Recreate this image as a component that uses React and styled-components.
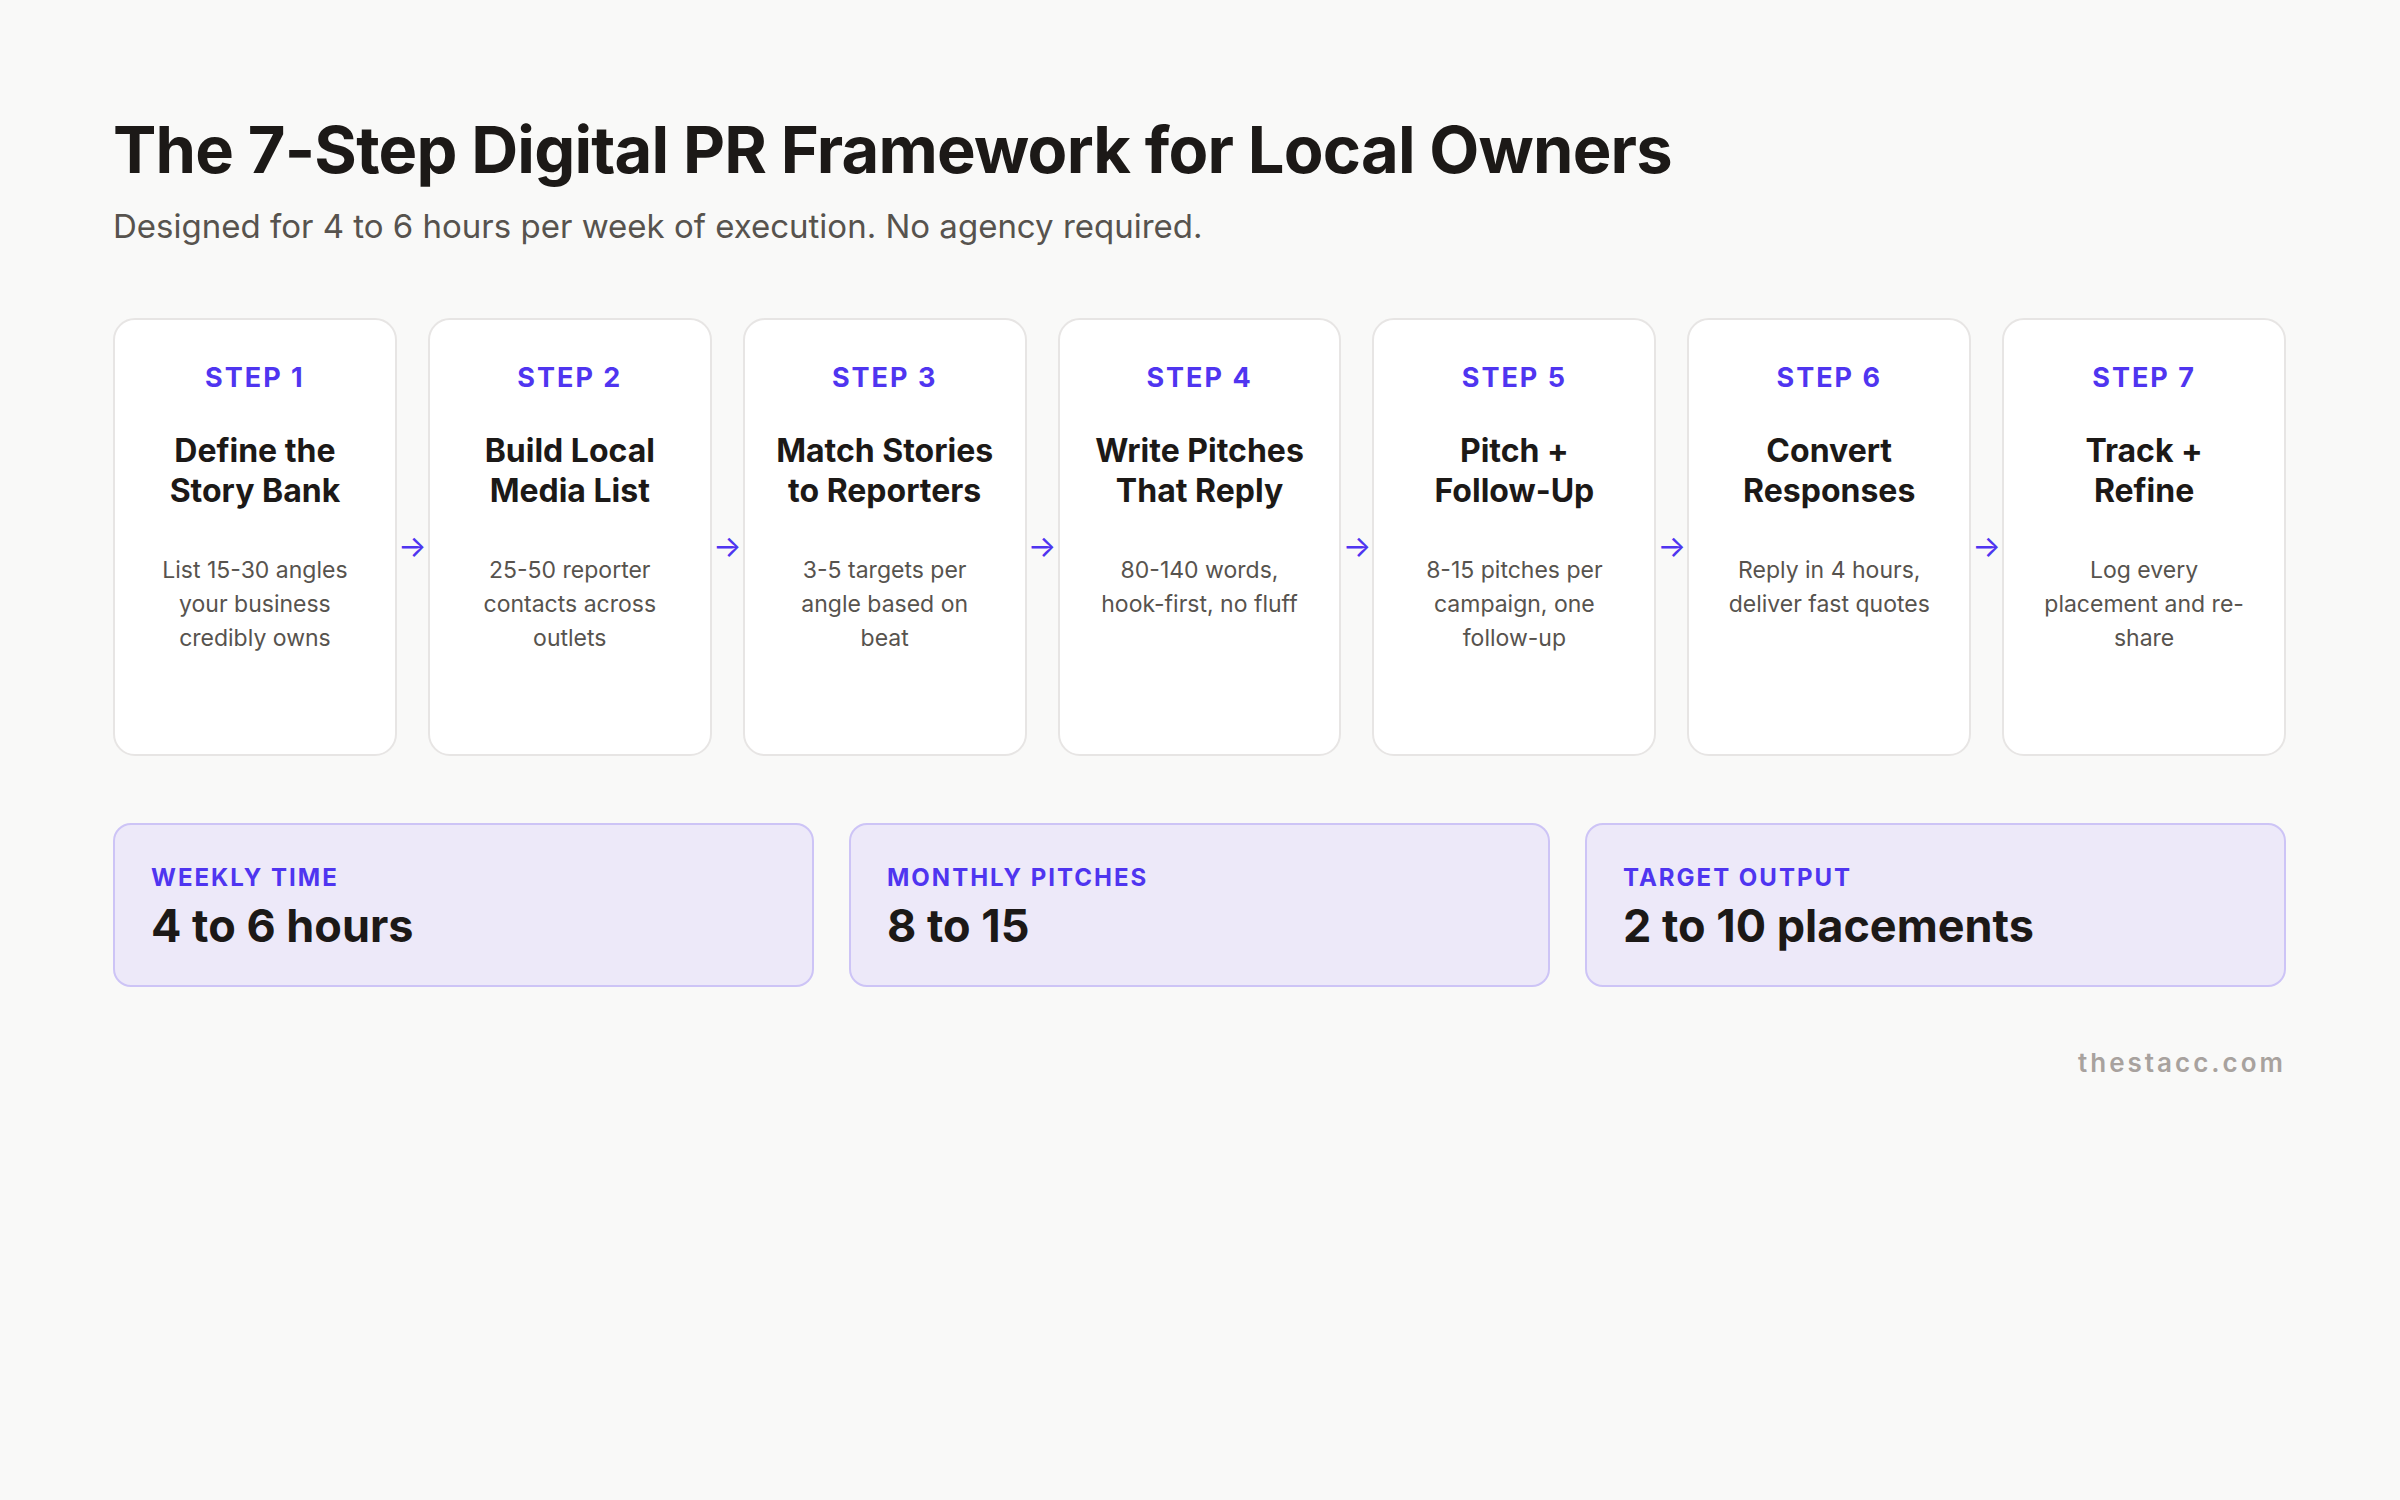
import React from "react";
import styled, { createGlobalStyle } from "styled-components";

const Global = createGlobalStyle`
  body { margin: 0; background: #f9f9f8; font-family: Inter, "Noto Sans", sans-serif; }
`;

const steps = [
  [["Define the", "Story Bank"], "List 15-30 angles your business credibly owns"],
  [["Build Local", "Media List"], "25-50 reporter contacts across outlets"],
  [["Match Stories", "to Reporters"], "3-5 targets per angle based on beat"],
  [["Write Pitches", "That Reply"], "80-140 words, hook-first, no fluff"],
  [["Pitch +", "Follow-Up"], "8-15 pitches per campaign, one follow-up"],
  [["Convert", "Responses"], "Reply in 4 hours, deliver fast quotes"],
  [["Track +", "Refine"], "Log every placement and re-share"],
];

const stats = [
  ["Weekly Time", "4 to 6 hours"],
  ["Monthly Pitches", "8 to 15"],
  ["Target Output", "2 to 10 placements"],
];

export default function App() {
  return (
    <Page>
      <Global />
      <Title>The 7-Step Digital PR Framework for Local Owners</Title>
      <Subtitle>Designed for 4 to 6 hours per week of execution. No agency required.</Subtitle>
      <Steps>
        {steps.map(([title, desc], i) => (
          <React.Fragment key={i}>
            <Card>
              <StepLabel>STEP {i + 1}</StepLabel>
              <StepTitle>{title[0]}<br />{title[1]}</StepTitle>
              <StepDesc>{desc}</StepDesc>
            </Card>
            {i < steps.length - 1 && <Arrow>→</Arrow>}
          </React.Fragment>
        ))}
      </Steps>
      <Stats>
        {stats.map(([label, value]) => (
          <Stat key={label}>
            <StatLabel>{label}</StatLabel>
            <StatValue>{value}</StatValue>
          </Stat>
        ))}
      </Stats>
      <Footer>thestacc.com</Footer>
    </Page>
  );
}

const Page = styled.div`
  padding: 108px 114px 0 113px;
  color: #1c1917;
`;

const Title = styled.h1`
  margin: 0;
  font-size: 65px;
  font-weight: 700;
  letter-spacing: -0.8px;
  line-height: 84px;
`;

const Subtitle = styled.p`
  margin: 14px 0 0;
  font-size: 33px;
  color: #57534e;
`;

const Steps = styled.div`
  display: flex;
  align-items: center;
  margin-top: 72px;
`;

const Card = styled.div`
  flex: 1;
  height: 438px;
  box-sizing: border-box;
  background: #fff;
  border: 2px solid #e7e5e4;
  border-radius: 22px;
  padding: 38px 34px 0;
  text-align: center;
`;

const Arrow = styled.div`
  width: 31px;
  flex: none;
  text-align: center;
  color: #4f35f0;
  font-size: 30px;
  padding-top: 18px;
`;

const StepLabel = styled.div`
  color: #4f35f0;
  font-size: 27px;
  font-weight: 700;
  letter-spacing: 2px;
  line-height: 40px;
`;

const StepTitle = styled.div`
  margin: 33px -10px 0;
  font-size: 32px;
  font-weight: 700;
  line-height: 40px;
`;

const StepDesc = styled.div`
  margin-top: 42px;
  font-size: 23px;
  line-height: 34px;
  color: #57534e;
`;

const Stats = styled.div`
  display: grid;
  grid-template-columns: repeat(3, 1fr);
  gap: 35px;
  margin-top: 67px;
`;

const Stat = styled.div`
  height: 164px;
  box-sizing: border-box;
  background: #ede9f9;
  border: 2px solid #cdc4f6;
  border-radius: 18px;
  padding: 37px 36px 0;
`;

const StatLabel = styled.div`
  color: #4f35f0;
  font-size: 24px;
  font-weight: 700;
  letter-spacing: 2px;
  text-transform: uppercase;
  line-height: 32px;
`;

const StatValue = styled.div`
  font-size: 45px;
  font-weight: 700;
  line-height: 56px;
  margin-top: 4px;
`;

const Footer = styled.div`
  text-align: right;
  margin-top: 60px;
  font-size: 26px;
  font-weight: 600;
  letter-spacing: 3px;
  color: #a8a29e;
`;
